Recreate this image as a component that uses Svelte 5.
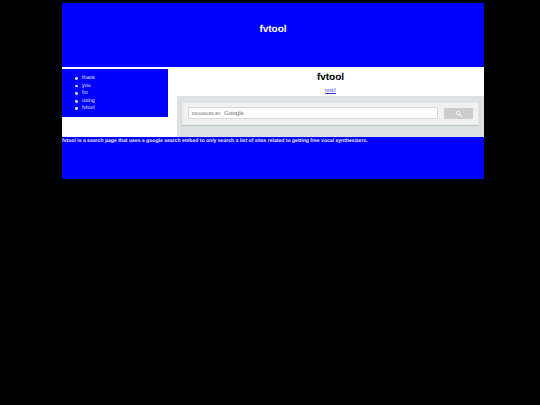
<script>
  const items = ['thank', 'you', 'for', 'using', 'fvtool'];
</script>

<div class="page">
  <header class="banner">fvtool</header>
  <div class="middle">
    <nav class="side">
      <ul>
        {#each items as item}
          <li>{item}</li>
        {/each}
      </ul>
    </nav>
    <main class="content">
      <h1>fvtool</h1>
      <p class="linkrow"><a href="#top">test2</a></p>
      <section class="searchwrap">
        <div class="searchcard">
          <div class="inputbox">
            <span class="enhanced">ENHANCED BY</span>
            <span class="google">Google</span>
          </div>
          <button class="searchbtn" aria-label="search">
            <svg viewBox="0 0 13 13" width="6" height="6">
              <path fill="#fff" d="m4.8495 7.8226c0.82666 0 1.5262-0.29146 2.0985-0.87438 0.57232-0.58292 0.86378-1.2877 0.87438-2.1144 0.010599-0.82666-0.28086-1.5262-0.87438-2.0985-0.59352-0.57232-1.293-0.86378-2.0985-0.87438-0.8055-0.010599-1.5103 0.28086-2.1144 0.87438-0.60414 0.59352-0.8956 1.293-0.87438 2.0985 0.021197 0.8055 0.31266 1.5103 0.87438 2.1144 0.56172 0.60414 1.2665 0.8956 2.1144 0.87438zm4.4695 0.2115 3.681 3.6819-1.259 1.284-3.6817-3.7 0.0019784-0.69479-0.090043-0.098846c-0.87973 0.76087-1.92 1.1413-3.1207 1.1413-1.3553 0-2.5025-0.46363-3.4417-1.3909s-1.4088-2.0686-1.4088-3.4239c0-1.3553 0.4696-2.4966 1.4088-3.4239 0.9392-0.92727 2.0864-1.3969 3.4417-1.4088 1.3553-0.011889 2.4906 0.45771 3.406 1.4088 0.9154 0.95107 1.379 2.0924 1.3909 3.4239 0 1.2126-0.38043 2.2588-1.1413 3.1385l0.098834 0.090049z"/>
            </svg>
          </button>
        </div>
      </section>
    </main>
  </div>
  <footer class="foot"><b>fvtool is a search page that uses a google search embed to only search a list of sites related to getting free vocal synthesizers.</b></footer>
</div>

<style>
  :global(body) {
    margin: 0;
    background: #000;
  }
  .page {
    width: 422px;
    margin-left: 62px;
    padding-top: 3px;
    font-family: "Liberation Sans", Arial, sans-serif;
    text-rendering: geometricPrecision;
  }
  .banner {
    height: 64px;
    box-sizing: border-box;
    padding-top: 21px;
    background: #0000ff;
    color: #fff;
    text-align: center;
    font-size: 10px;
    font-weight: bold;
    line-height: 12px;
  }
  .middle {
    display: flex;
    height: 70px;
    background: #fff;
  }
  .side {
    width: 106px;
    height: 48px;
    margin-top: 2px;
    background: #0000ff;
    color: #e6e6ff;
    font-size: 5.3px;
    box-sizing: border-box;
    padding-top: 6px;
  }
  .side ul {
    margin: 0;
    padding: 0 0 0 20px;
    list-style: none;
  }
  .side li {
    position: relative;
    height: 7.6px;
    line-height: 7.6px;
  }
  .side li::before {
    content: "";
    position: absolute;
    left: -7px;
    top: 2px;
    width: 2.8px;
    height: 2.8px;
    border-radius: 50%;
    background: #e6e6ff;
  }
  .content {
    flex: 1;
    display: flex;
    flex-direction: column;
    padding-left: 9px;
  }
  h1 {
    margin: 0;
    box-sizing: border-box;
    padding-top: 5px;
    height: 19px;
    text-align: center;
    font-size: 10px;
    line-height: 12px;
    color: #000;
  }
  .linkrow {
    margin: 0;
    box-sizing: border-box;
    padding-top: 2px;
    height: 10px;
    text-align: center;
    font-size: 5px;
    line-height: 6px;
  }
  .linkrow a {
    color: #3a3aee;
  }
  .searchwrap {
    flex: 1;
    box-sizing: border-box;
    background: #dde1e4;
    padding: 6px 5px 0;
  }
  .searchcard {
    height: 23px;
    box-sizing: border-box;
    padding: 4px 5px 0 5px;
    display: flex;
    gap: 6px;
    align-items: flex-start;
    background: #f1f1f1;
    border: 1px solid #e6e6e6;
    box-shadow: 0 1px 1px #c4c8cb;
  }
  .inputbox {
    flex: 1;
    height: 12px;
    box-sizing: border-box;
    display: flex;
    align-items: center;
    padding-left: 3px;
    background: #fff;
    border: 1px solid #d9d9d9;
    color: #757575;
  }
  .enhanced {
    font-size: 3.9px;
    font-weight: bold;
    margin-right: 3.5px;
    white-space: nowrap;
    color: #8a8a8a;
  }
  .google {
    font-size: 6.2px;
    line-height: 8px;
    padding-top: 1px;
    white-space: nowrap;
  }
  .searchbtn {
    width: 29px;
    height: 11px;
    margin-top: 1px;
    padding: 0;
    border: 0;
    background: #cdcdcf;
    display: flex;
    align-items: center;
    justify-content: center;
  }
  .foot {
    height: 42px;
    box-sizing: border-box;
    background: #0000ff;
    color: #e6e6ff;
    font-size: 5.08px;
    line-height: 8px;
  }
</style>
